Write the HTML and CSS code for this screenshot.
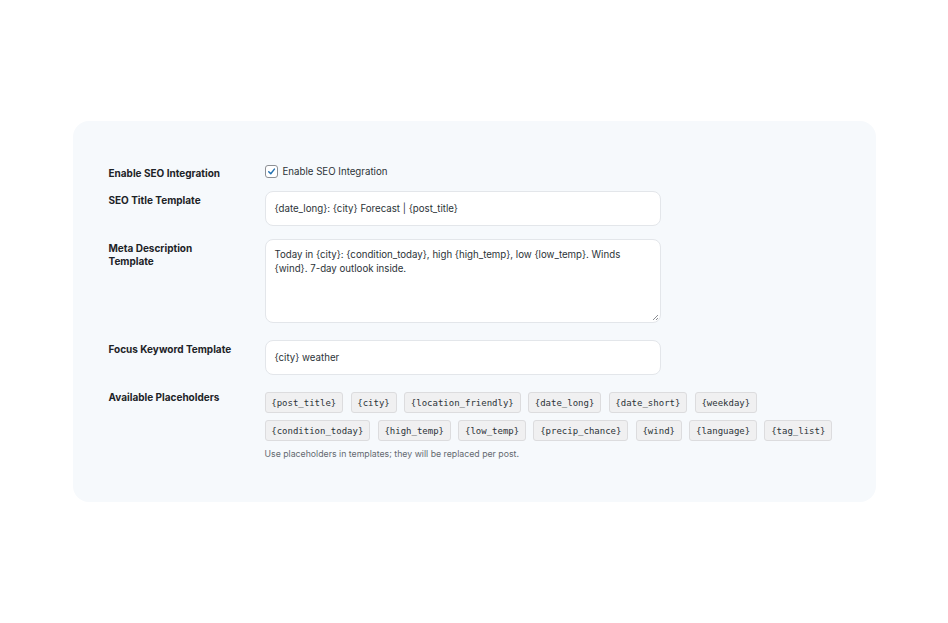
FILE: index.html
```html
<!DOCTYPE html>
<html lang="en">
<head>
<meta charset="utf-8">
<title>SEO Integration</title>
<link rel="stylesheet" href="styles.css">
</head>
<body>
<main class="card">
  <div class="form">
    <div class="label label-check">Enable SEO Integration</div>
    <label class="check">
      <span class="box"><svg viewBox="0 0 12 12" width="12" height="12"><path d="M3 6.2 L5.2 8.4 L9.2 3.4" fill="none" stroke="#2271b1" stroke-width="1.6" stroke-linecap="round" stroke-linejoin="round"/></svg></span>
      <span>Enable SEO Integration</span>
    </label>

    <div class="label">SEO Title Template</div>
    <div class="input">{date_long}: {city} Forecast | {post_title}</div>

    <div class="label">Meta Description<br>Template</div>
    <div class="textarea">Today in {city}: {condition_today}, high {high_temp}, low {low_temp}. Winds {wind}. 7-day outlook inside.<svg class="grip" viewBox="0 0 8 8" width="8" height="8"><path d="M7 2 L2 7 M7 5 L5 7" stroke="#8c8f94" stroke-width="1"/></svg></div>

    <div class="label">Focus Keyword Template</div>
    <div class="input input-last">{city} weather</div>

    <div class="label label-chips">Available Placeholders</div>
    <div class="chips-wrap">
      <div class="chips">
        <code class="chip">{post_title}</code>
        <code class="chip">{city}</code>
        <code class="chip">{location_friendly}</code>
        <code class="chip">{date_long}</code>
        <code class="chip">{date_short}</code>
        <code class="chip">{weekday}</code>
        <code class="chip">{condition_today}</code>
        <code class="chip">{high_temp}</code>
        <code class="chip">{low_temp}</code>
        <code class="chip">{precip_chance}</code>
        <code class="chip">{wind}</code>
        <code class="chip">{language}</code>
        <code class="chip">{tag_list}</code>
      </div>
      <p class="help">Use placeholders in templates; they will be replaced per post.</p>
    </div>
  </div>
</main>
</body>
</html>
```
FILE: styles.css
```css
html, body {
  margin: 0;
  padding: 0;
  background: #ffffff;
}
body {
  min-height: 100vh;
  display: flex;
  align-items: center;
  justify-content: center;
  font-family: "Inter", "Liberation Sans", sans-serif;
  color: #1d2327;
}
.card {
  width: 803px;
  height: 381px;
  box-sizing: border-box;
  background: #f6f9fc;
  border-radius: 16px;
  padding: 43px 36px;
}
.form {
  display: grid;
  grid-template-columns: 128px 1fr;
  column-gap: 28px;
  row-gap: 13px;
  align-items: start;
}
.label {
  font-size: 10px;
  line-height: 13px;
  font-weight: 700;
  padding-top: 3px;
  color: #1d2327;
}
.label-check {
  padding-top: 0;
  margin-top: 3px;
  margin-bottom: -3px;
}
.label-chips {
  padding-top: 0;
  margin-top: -1px;
}
.check {
  display: flex;
  align-items: center;
  gap: 5px;
  height: 14px;
  font-size: 9.7px;
  color: #2c3338;
}
.box {
  width: 11px;
  height: 11px;
  border: 1px solid #8c8f94;
  border-radius: 3px;
  background: #fff;
  display: flex;
  align-items: center;
  justify-content: center;
}
.box svg { width: 11px; height: 11px; }
.input, .textarea {
  width: 396px;
  background: #fff;
  border: 1px solid #e3e6ea;
  border-radius: 8px;
  box-sizing: border-box;
  font-size: 9.7px;
  color: #2c3338;
}
.input {
  height: 35px;
  padding: 0 9px;
  display: flex;
  align-items: center;
}
.input-last {
  margin-bottom: 4px;
}
.textarea {
  height: 84px;
  padding: 8px 9px;
  line-height: 14px;
  position: relative;
  margin-bottom: 4px;
}
.grip {
  position: absolute;
  right: 1px;
  bottom: 1px;
}
.chips-wrap { display: flex; flex-direction: column; }
.chips {
  display: flex;
  flex-wrap: wrap;
  gap: 7px 7.5px;
}
.chip {
  font-family: "DejaVu Sans Mono", monospace;
  font-size: 9px;
  height: 21px;
  box-sizing: border-box;
  padding: 0 5.75px;
  border: 1px solid #dcdcde;
  border-radius: 3px;
  background: #f0f0f1;
  color: #2c3338;
  display: flex;
  align-items: center;
}
.help {
  margin: 7px 0 0;
  font-size: 8.75px;
  line-height: 12px;
  color: #646970;
}
```
